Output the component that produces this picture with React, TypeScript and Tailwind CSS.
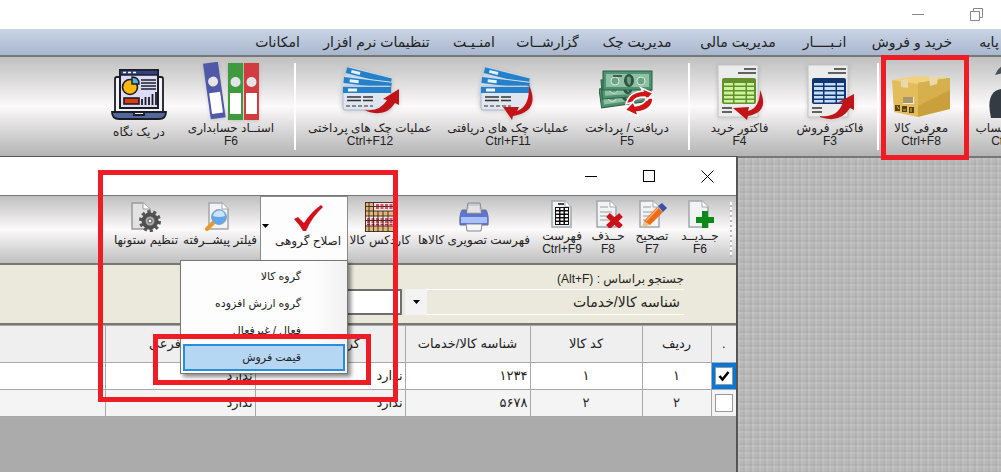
import type { ReactNode } from "react";

type Tool = {
  label: string;
  shortcut?: string;
  width: string;
  icon: ReactNode;
  divider?: boolean;
  highlighted?: boolean;
};

function SheetIcon({ dark, light, children }: { dark: string; light: string; children: ReactNode }) {
  return (
    <svg width="56" height="60" viewBox="0 0 56 60" className="drop-shadow-sm">
      <rect x="6" y="3" width="40" height="52" fill="#ececec" stroke="#c4c4c4" />
      <path d="M32 7h12M26 11h18M10 46h10M10 50h10" stroke="#333" strokeWidth="1.4" />
      <rect x="10" y="16" width="34" height="26" rx="2" fill={dark} />
      <path d="M12 21h9v2.500h-9zM22.500 21h11v2.500h-11zM35 21h7v2.500h-7zM12 25h9v3h-9zM22.500 25h11v3h-11zM35 25h7v3h-7zM12 29.500h9v3h-9zM22.500 29.500h11v3h-11zM35 29.500h7v3h-7zM12 34h9v2.500h-9zM22.500 34h11v2.500h-11zM35 34h7v2.500h-7zM12 38h9v2.500h-9zM22.500 38h11v2.500h-11zM35 38h7v2.500h-7z" fill={light} />
      {children}
    </svg>
  );
}

function ChequeIcon({ children }: { children: ReactNode }) {
  return (
    <svg width="60" height="60" viewBox="0 0 60 60" className="drop-shadow-sm">
      <g transform="rotate(14 6 6)">
        <rect x="7" y="4" width="46" height="30" rx="2" fill="#c9d8e8" />
        <rect x="7" y="5" width="46" height="6" fill="#2480c8" />
        <path d="M12 8h9" stroke="#e6f2fa" strokeWidth="3" />
      </g>
      <g transform="rotate(7 4 16)">
        <rect x="4" y="14" width="48" height="30" rx="2" fill="#d3dfec" />
        <rect x="4" y="15" width="48" height="6" fill="#2480c8" />
        <path d="M10 18h9" stroke="#e6f2fa" strokeWidth="3" />
      </g>
      <rect x="3" y="24" width="48" height="24" rx="2" fill="#dfe6ef" stroke="#a9b7cd" />
      <rect x="3" y="25" width="48" height="6" fill="#2480c8" />
      <path d="M8 28h9" stroke="#eef6fb" strokeWidth="3" />
      <path d="M7 35h14M23 35h10M7 38.500h14M23 38.500h10" stroke="#333" strokeWidth="1.500" />
      <path d="M6 44h27" stroke="#888" strokeWidth="2" strokeDasharray="4 2" />
      {children}
    </svg>
  );
}

function DashboardIcon() {
  return (
    <svg width="56" height="60" viewBox="0 0 56 60">
      <path d="M4 17q0-2 2-2h44q2 0 2 2v33H4z" fill="#f3f3f8" stroke="#1c1c26" strokeWidth="1.800" />
      <rect x="9" y="8" width="38" height="38" fill="#dcdcf8" stroke="#1c1c26" strokeWidth="2" />
      <path d="M9 8h38v5H9z" fill="#2f4380" stroke="#1c1c26" strokeWidth="1.400" />
      <path d="M12 10.500h3M17 10.500h3M22 10.500h3" stroke="#fff" strokeWidth="1.500" />
      <circle cx="19" cy="25" r="7.500" fill="#ffb80c" stroke="#1c1c26" strokeWidth="1.600" />
      <path d="M21 22v-7q7 0 7 7z" fill="#54b5dc" stroke="#1c1c26" strokeWidth="1.400" />
      <path d="M30 18h15M30 21h15M30 24h15M30 27h15" stroke="#1c1c26" strokeWidth="1.500" />
      <rect x="13" y="36" width="15" height="6" fill="#dc3b0c" stroke="#1c1c26" strokeWidth="1.600" />
      <path d="M31 43v-6M34.500 43v-8M38 43v-8M41.500 43V32M45 43V30" stroke="#1c1c26" strokeWidth="1.800" />
      <path d="M1 50h22v3h10v-3h22q0 7-7 7H8q-7 0-7-7z" fill="#53689a" stroke="#1c1c26" strokeWidth="1.800" />
    </svg>
  );
}

function BindersIcon() {
  return (
    <svg width="60" height="60" viewBox="0 0 60 60" className="drop-shadow">
      <g transform="rotate(-8 10 30)">
        <rect x="6" y="1" width="15" height="56" fill="#5058a8" />
        <circle cx="13.500" cy="20" r="5" fill="#e4e4e4" />
        <rect x="8" y="31" width="11" height="21" fill="#fff" />
      </g>
      <rect x="27" y="1" width="15" height="57" fill="#3f9a3f" />
      <circle cx="34.500" cy="20" r="5" fill="#e4e4e4" />
      <rect x="29" y="31" width="11" height="21" fill="#fff" />
      <rect x="43" y="1" width="15" height="57" fill="#d03c40" />
      <circle cx="50.500" cy="20" r="5" fill="#e4e4e4" />
      <rect x="45" y="31" width="11" height="21" fill="#fff" />
    </svg>
  );
}

function MoneyIcon() {
  return (
    <svg width="56" height="60" viewBox="0 0 56 60">
      {[0, 1, 2].map((i) => (
        <g key={i} transform={`translate(${i * 2} ${(2 - i) * 9 + 9}) rotate(${(2 - i) * -4})`}>
          <rect y="0" width="49" height="19" fill="#4f9170" stroke="#2b5c44" />
          <rect x="3" y="3" width="43" height="13" fill="#8fc0a4" />
          <circle cx="12" cy="10" r="4" fill="#6aa486" stroke="#d5eadc" />
          <circle cx="38" cy="10" r="4" fill="#6aa486" stroke="#d5eadc" />
          <ellipse cx="26" cy="9.500" rx="5" ry="6.500" fill="#2a5540" />
          <path d="M24 6q4-2 4 3t-2 5q-3-3-2-8z" fill="#6f9c82" />
          <path d="M10 5h9" stroke="#273f35" strokeWidth="1.500" />
        </g>
      ))}
      <path d="M27 42q3-12 17-13l-2-3 12 5-6 7-2-3q-10 0-12 5zM54 36q0 12-16 14l1 4-13-6 8-8 2 4q9-1 12-8z" fill="#d01418" stroke="#fff" strokeWidth="1.500" />
    </svg>
  );
}

function BoxIcon() {
  return (
    <svg width="60" height="60" viewBox="0 0 60 60">
      <path d="M1 18 24 14l35 2-32 7z" fill="#f0d27c" />
      <path d="M1 18l26 4v33L3 50z" fill="#e3bd5b" />
      <path d="M27 21l32-5v31l-32 8z" fill="#c9a03c" />
      <path d="M27 21l32-5v12L27 44z" fill="#d6b04c" />
      <path d="M10 18l7-1v9l-7-1zM38 15l9-1-1 8-7 2z" fill="#e9d9aa" />
      <path d="M12 35h11v7H12z" fill="#f3ead0" />
      <path d="M13 35v6M15 35v6M17 35v6M19 35v6M21 35v6" stroke="#66501c" strokeWidth="1.100" />
      <path d="M4 43h5v6H4zM11 44h5v6h-5zM18 45h5v6h-5z" fill="#574414" />
      <path d="M6 44l2 3M12 48h3M20 46v4" stroke="#e3bd5b" />
    </svg>
  );
}

function PersonIcon() {
  return (
    <svg width="60" height="60" viewBox="0 0 60 60">
      <path d="M10 56q-6-26 10-29h22q16 3 14 29z" fill="#343b42" />
      <ellipse cx="33" cy="19" rx="13" ry="16" fill="#e4b48c" />
      <path d="M14 13q4-12 21-12t22 12q-21-6-43 0z" fill="#4b5056" />
      <path d="M26 30l7 12 7-12z" fill="#fff" />
    </svg>
  );
}

const ribbonTools: Tool[] = [
  { label: "معرفی حساب", shortcut: "Ctrl+F7", width: "w-[92px]", icon: <PersonIcon /> },
  { label: "معرفی کالا", shortcut: "Ctrl+F8", width: "w-[88px]", icon: <BoxIcon />, divider: true, highlighted: true },
  {
    label: "فاکتور فروش",
    shortcut: "F3",
    width: "w-[94px]",
    icon: (
      <SheetIcon dark="#12346f" light="#c4defc">
        <path d="M18 54q18 2 23-14l-6 1 17-9v16l-4-2q-10 16-30 9z" fill="#c01418" />
      </SheetIcon>
    ),
  },
  {
    label: "فاکتور خرید",
    shortcut: "F4",
    width: "w-[95px] pl-2",
    divider: true,
    icon: (
      <SheetIcon dark="#648f2c" light="#c8f49c">
        <path d="M48 28q10 22-12 26l-1 4-14-12 16-1-1 4q12-3 12-21z" fill="#c01418" />
      </SheetIcon>
    ),
  },
  { label: "دریافت / پرداخت", shortcut: "F5", width: "w-[118px] pr-1", icon: <MoneyIcon /> },
  {
    label: "عملیات چک های دریافتی",
    shortcut: "Ctrl+F11",
    width: "w-[124px]",
    icon: (
      <ChequeIcon>
        <path d="M51 23q12 26-16 31l-1 4-9-13h16l-2 4q13-5 12-26z" fill="#c01418" />
      </ChequeIcon>
    ),
  },
  {
    label: "عملیات چک های پرداختی",
    shortcut: "Ctrl+F12",
    width: "w-[152px]",
    divider: true,
    icon: (
      <ChequeIcon>
        <path d="M24 48q16 2 23-10l-4-1 16-10v16l-4-2q-10 16-31 7z" fill="#c01418" />
      </ChequeIcon>
    ),
  },
  { label: "اسنــاد حسابداری", shortcut: "F6", width: "w-[126px]", icon: <BindersIcon /> },
  { label: "در یک نگاه", width: "w-[58px]", icon: <DashboardIcon /> },
];

const menuItems = [
  { label: "پایه", width: "w-[24px]" },
  { label: "خرید و فروش", width: "w-[82px]" },
  { label: "انـبــــار", width: "w-[45px]" },
  { label: "مدیریت مالی", width: "w-[80px]" },
  { label: "مدیریت چک", width: "w-[74px]" },
  { label: "گزارشــات", width: "w-[57px]" },
  { label: "امنـیـت", width: "w-[42px]" },
  { label: "تنظیمات نرم افزار", width: "w-[105px]" },
  { label: "امکانات", width: "w-[45px]" },
];

function Page({ lines = false }: { lines?: boolean }) {
  return (
    <>
      <path d="M4 1h13l6 6v20H4z" fill="#f2f3f4" stroke="#a3a8ac" strokeWidth="1.500" />
      <path d="M17 1v6h6" fill="#fff" stroke="#a3a8ac" />
      {lines && <path d="M7 7h8M7 12h12M7 16h12M7 20h12" stroke="#9a9da0" strokeWidth="1.200" />}
    </>
  );
}

const windowTools: Tool[] = [
  {
    label: "جــدیــد",
    shortcut: "F6",
    width: "w-[48px]",
    icon: (
      <svg width="30" height="28" viewBox="0 0 30 28">
        <Page />
        <path d="M17 11h6v6h6v6h-6v6h-6v-6h-6v-6h6z" fill="#0c8a18" />
      </svg>
    ),
  },
  {
    label: "تصحیح",
    shortcut: "F7",
    width: "w-[48px]",
    icon: (
      <svg width="30" height="28" viewBox="1 0 30 28">
        <Page lines />
        <path d="M6 27l2-6 6 4z" fill="#e8c48c" />
        <path d="M8 21 21 7l6 5-13 13z" fill="#ef6c16" />
        <path d="M10 21 22 8" stroke="#ffb070" strokeWidth="1.500" />
        <path d="M22 6l4-3 5 5-4 4z" fill="#3a4fa8" />
      </svg>
    ),
  },
  {
    label: "حــذف",
    shortcut: "F8",
    width: "w-[40px]",
    icon: (
      <svg width="30" height="28" viewBox="0 0 30 28">
        <Page lines />
        <path d="M15 15l13 12M28 15 15 27" stroke="#cc1218" strokeWidth="5.500" />
      </svg>
    ),
  },
  {
    label: "فهرست",
    shortcut: "Ctrl+F9",
    width: "w-[52px]",
    icon: (
      <svg width="28" height="28" viewBox="0 0 28 28">
        <Page />
        <path d="M7 7h14v18H7z" fill="#111" />
        <path d="M8 8h3v2H8zM12.500 8h3v2h-3zM17 8h3v2h-3zM8 11.500h3v2H8zM12.500 11.500h3v2h-3zM17 11.500h3v2h-3zM8 15h3v2H8zM12.500 15h3v2h-3zM17 15h3v2h-3zM8 18.500h3v2H8zM12.500 18.500h3v2h-3zM17 18.500h3v2h-3zM8 22h3v2H8zM12.500 22h3v2h-3zM17 22h3v2h-3z" fill="#fff" />
        <path d="M10 4h6" stroke="#111" strokeWidth="1.500" />
      </svg>
    ),
  },
  {
    label: "فهرست تصویری کالاها",
    width: "w-[124px]",
    icon: (
      <svg width="30" height="30" viewBox="0 0 30 30">
        <path d="M9 1h12l2 11H7z" fill="#c9cbcf" stroke="#85898f" />
        <path d="M10 4h10l1 6H9z" fill="#e4e4e8" />
        <path d="M3 8h4v4h16V8h4q3 5 2 15H1Q0 13 3 8z" fill="#5b74e4" stroke="#6c7186" />
        <path d="M2 15h26v6H2z" fill="#a9c0fb" />
        <path d="M7 22h16l-1 7H8z" fill="#f6f6f6" stroke="#85898f" />
      </svg>
    ),
  },
  {
    label: "کاردکس کالا",
    width: "w-[64px]",
    icon: (
      <svg width="30" height="30" viewBox="0 0 30 30">
        <rect width="30" height="29" y="0.500" fill="#f6e6df" />
        <path d="M0 0h9v9H0zM0 9h30v5H0zM0 24h30v5H0z" fill="#dcb67a" />
        <path d="M11 3h18M11 6h18M2 17h26M2 20h26M2 22.500h26" stroke="#cf2240" strokeWidth="1.500" strokeDasharray="3 1.500" />
        <path d="M0 .5h30M0 4.500h30M0 9h30M0 14h30M0 18.500h30M0 24h30M0 29.500h30M.5 0v30M4 0v30M8.500 0v30M13 9v21M18 9v21M23 9v21M29.500 0v30" stroke="#3c211b" strokeWidth=".9" />
      </svg>
    ),
  },
];

const filterTools: Tool[] = [
  {
    label: "فیلتر پیشــرفته",
    width: "w-[80px]",
    icon: (
      <svg width="30" height="30" viewBox="0 0 30 30">
        <Page />
        <path d="M8 21l-6 6" stroke="#e59a2c" strokeWidth="4" strokeLinecap="round" />
        <circle cx="14" cy="15" r="7.500" fill="#63a6ee" stroke="#8fa4bc" />
        <path d="M8 14q1-5 6-5.500t6 5.500q-6 2-12 0z" fill="#c8e4ff" />
      </svg>
    ),
  },
  {
    label: "تنظیم ستونها",
    width: "w-[68px]",
    icon: (
      <svg width="30" height="30" viewBox="0 0 30 30">
        <path d="M1 1h11l7 6v20H1z" fill="#e2e2e2" stroke="#9b9b9b" strokeWidth="1.500" />
        <path d="M12 1v6h7" fill="#fff" stroke="#9b9b9b" />
        <circle cx="19" cy="19" r="9.500" fill="none" stroke="#555" strokeWidth="3" strokeDasharray="3.200 2.760" />
        <circle cx="19" cy="19" r="6.500" fill="#aaa" stroke="#4f4f4f" strokeWidth="4" />
        <circle cx="19" cy="19" r="2" fill="#f4f4f4" stroke="#555" />
      </svg>
    ),
  },
];

const groupEdits = ["گروه کالا", "گروه ارزش افزوده", "فعال / غیرفعال", "قیمت فروش"];

const rows = [
  { index: "۱", code: "۱", id: "۱۲۳۴", main: "ندارد", sub: "ندارد", checked: true },
  { index: "۲", code: "۲", id: "۵۶۷۸", main: "ندارد", sub: "ندارد", checked: false },
];

function RibbonButton({ tool }: { tool: Tool }) {
  return (
    <div className={`relative flex shrink-0 justify-center ${tool.width}`}>
      <button className="flex flex-col items-center whitespace-nowrap pt-1 text-xs leading-[13px]">
        <span className="flex h-[61px] items-center">{tool.icon}</span>
        <span className={tool.shortcut ? "" : "pt-1"}>{tool.label}</span>
        {tool.shortcut && <span dir="ltr">{tool.shortcut}</span>}
      </button>
      {tool.divider && <span className="absolute inset-y-1.5 left-0 w-0.5 bg-white" />}
      {tool.highlighted && <span className="absolute -bottom-1 left-1 -right-1 -top-0.5 border-[5px] border-[#ee1c25]" />}
    </div>
  );
}

function ToolButton({ tool }: { tool: Tool }) {
  return (
    <button className={`flex shrink-0 flex-col items-center whitespace-nowrap text-xs leading-[13px] ${tool.shortcut ? "pt-1" : "pt-1.5"} ${tool.width}`}>
      {tool.icon}
      <span className="pt-0.5">{tool.label}</span>
      {tool.shortcut && <span dir="ltr">{tool.shortcut}</span>}
    </button>
  );
}

function GroupEditButton() {
  return (
    <div className="relative w-[88px] shrink-0 border-x border-t border-[#8a8a8a] bg-[#fdfdfd]">
      <button className="flex w-full items-center whitespace-nowrap pt-1.5 text-xs leading-[13px]">
        <span className="flex w-[78px] shrink-0 flex-col items-center">
          <svg width="30" height="30" viewBox="0 0 30 30">
            <path d="M1 16l4-2 6 6Q18 9 28 2l2 2Q19 14 13 28h-3Q6 21 1 16z" fill="#d4101c" />
          </svg>
          <span className="pt-0.5">اصلاح گروهی</span>
        </span>
        <svg width="7" height="4" viewBox="0 0 7 4" className="shrink-0">
          <path d="M0 0h7L3.500 4z" fill="#000" />
        </svg>
      </button>
      <ul className="absolute -right-px top-[63px] z-20 w-[168px] border border-[#777] bg-gradient-to-l from-[#f1f1f1] to-[#fdfdfd] to-20% p-0.5 text-[11px] shadow-[3px_3px_4px_rgba(0,0,0,0.45)]">
        {groupEdits.map((item, i) => (
          <li key={item}>
            <button
              className={
                i === 3
                  ? "block h-[27px] w-full border-2 border-[#2a8ddc] bg-[#b5d7f3] pr-[42px] text-right"
                  : "block h-[27px] w-full pr-11 text-right"
              }
            >
              {item}
            </button>
          </li>
        ))}
        <li aria-hidden="true" className="pointer-events-none absolute -bottom-3 -left-7 -right-6 h-[51px] border-[5px] border-[#ee1c25]" />
      </ul>
    </div>
  );
}

function SearchPanel() {
  return (
    <div className="h-[60px] border-b-2 border-[#777] bg-[#ebe9db] pr-[52px] pt-1">
      <label htmlFor="search-by" className="block text-xs leading-5">
        جستجو براساس : <span dir="ltr">(Alt+F)</span>
      </label>
      <div className="flex h-[26px]">
        <div className="relative w-[279px]">
          <select
            id="search-by"
            className="h-full w-full appearance-none border-y border-white bg-transparent pr-1 text-sm outline-none"
          >
            <option>شناسه کالا/خدمات</option>
          </select>
          <span className="pointer-events-none absolute inset-y-0 left-0 flex w-[22px] items-center justify-center bg-[#f3f3f3]">
            <svg width="7" height="4" viewBox="0 0 7 4">
              <path d="M0 0h7L3.500 4z" fill="#000" />
            </svg>
          </span>
        </div>
        <input aria-label="جستجو" className="mr-[3px] w-[200px] border-2 border-[#6e6e6e] bg-white px-1 text-sm outline-none" />
      </div>
    </div>
  );
}

function GoodsTable() {
  return (
    <table className="w-full table-fixed border-collapse text-[13px] [&_td]:border [&_td]:border-[#a8a8a8] [&_th]:border [&_th]:border-[#a8a8a8] [&_tr>*:first-child]:border-r-0 [&_tr>*:last-child]:border-l-0">
      <colgroup>
        <col className="w-[25px]" />
        <col className="w-[69px]" />
        <col className="w-[112px]" />
        <col className="w-[125px]" />
        <col className="w-[150px]" />
        <col className="w-[150px]" />
        <col />
      </colgroup>
      <thead>
        <tr className="h-[37px] bg-[#efefef] [&>th]:font-normal">
          <th>.</th>
          <th>ردیف</th>
          <th>کد کالا</th>
          <th>شناسه کالا/خدمات</th>
          <th>گروه اصلی</th>
          <th>گروه فرعی</th>
          <th></th>
        </tr>
      </thead>
      <tbody>
        {rows.map((row) => (
          <tr key={row.index} className="h-[27px] bg-white even:bg-[#f4f4f4]">
            <td className={row.checked ? "bg-[#0078d7]" : ""}>
              <span className="relative mx-auto flex size-[18px] items-center justify-center">
                <input
                  type="checkbox"
                  aria-label={row.id}
                  defaultChecked={row.checked}
                  className="peer size-[18px] appearance-none border border-[#999] bg-white"
                />
                <svg width="12" height="12" viewBox="0 0 12 12" className="pointer-events-none absolute hidden peer-checked:block">
                  <path d="M1.500 6l3 3.500 6-7.500" fill="none" stroke="#000" strokeWidth="2.500" />
                </svg>
              </span>
            </td>
            <td className="text-center">{row.index}</td>
            <td className="text-center">{row.code}</td>
            <td className="pr-0.5">{row.id}</td>
            <td className="pr-0.5">{row.main}</td>
            <td className="pr-0.5">{row.sub}</td>
            <td></td>
          </tr>
        ))}
      </tbody>
    </table>
  );
}

function GoodsWindow() {
  return (
    <section className="relative flex flex-1 flex-col border-r-2 border-t border-[#555] bg-[#ababab]">
      <div dir="ltr" className="flex h-[38px] justify-end bg-white">
        <button aria-label="Minimize" className="flex w-[58px] items-center justify-center">
          <span className="h-px w-3 bg-black" />
        </button>
        <button aria-label="Maximize" className="flex w-[58px] items-center justify-center">
          <span className="size-3 border border-black" />
        </button>
        <button aria-label="Close" className="flex w-[58px] items-center justify-center">
          <svg width="13" height="13" viewBox="0 0 13 13">
            <path d="M.5.5l12 12M12.500.5l-12 12" stroke="#000" />
          </svg>
        </button>
      </div>
      <div className="flex h-[70px] border-b-2 border-t border-[#777] bg-gradient-to-b from-[#c0c0c0] via-[#fcfafa] to-[#c0c0c0]">
        <span className="my-1.5 ml-1.5 mr-1 w-0.5 shrink-0 bg-[repeating-linear-gradient(#fff_0_3px,#bbb_3px_5px)]" />
        {windowTools.map((tool) => (
          <ToolButton key={tool.label} tool={tool} />
        ))}
        <GroupEditButton />
        {filterTools.map((tool) => (
          <ToolButton key={tool.label} tool={tool} />
        ))}
      </div>
      <SearchPanel />
      <GoodsTable />
      <span className="pointer-events-none absolute right-[338px] top-[13px] z-10 h-[232px] w-[300px] border-[5px] border-[#ee1c25]" />
    </section>
  );
}

export default function App() {
  return (
    <div dir="rtl" className="flex min-h-screen flex-col overflow-hidden bg-white text-[#222] font-['Liberation_Sans','DejaVu_Sans',sans-serif]">
      <div dir="ltr" className="-mr-1 flex h-[29px] justify-end">
        <button aria-label="Minimize" className="flex w-[58px] items-center justify-center">
          <span className="h-px w-3 bg-[#888]" />
        </button>
        <button aria-label="Restore" className="flex w-[58px] items-center justify-center">
          <svg width="13" height="13" viewBox="0 0 13 13" fill="none" stroke="#888">
            <path d="M.5 3.500h9v9h-9zM3.500 3.500v-3h9v9h-3" />
          </svg>
        </button>
      </div>
      <nav className="flex h-7 items-center gap-6 border-b-2 border-[#777] bg-gradient-to-b from-[#c9d5e5] to-[#a9b7ce] text-sm">
        {menuItems.map((item) => (
          <button key={item.label} className={`flex shrink-0 justify-center whitespace-nowrap ${item.width}`}>
            {item.label}
          </button>
        ))}
      </nav>
      <div className="relative z-10 -mr-14 flex h-[99px] bg-gradient-to-b from-[#c0c0c0] via-[#fcfafa] to-[#b4b4b4]">
        {ribbonTools.map((tool) => (
          <RibbonButton key={tool.label} tool={tool} />
        ))}
      </div>
      <main className="flex flex-1">
        <aside className="w-[263px] shrink-0 border-t-2 border-[#777] bg-[#b8b8b8] bg-[repeating-linear-gradient(90deg,rgba(255,255,255,0.09)_0_2px,transparent_2px_5px,rgba(0,0,0,0.03)_5px_7px),repeating-linear-gradient(rgba(255,255,255,0.09)_0_2px,transparent_2px_5px,rgba(0,0,0,0.03)_5px_7px)]" />
        <GoodsWindow />
      </main>
    </div>
  );
}
